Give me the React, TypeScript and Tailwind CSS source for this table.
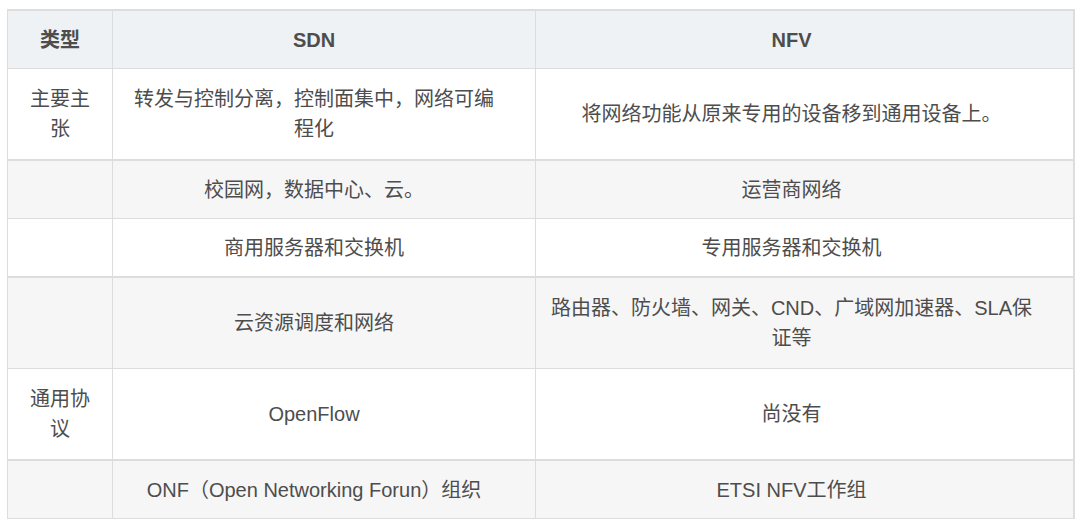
import React from "react";

type Row = {
  c: [string, string, string];
  h: string;
  bg: string;
  bb: string;
  header?: boolean;
};

const rows: Row[] = [
  { c: ["类型", "SDN", "NFV"], h: "h-[57px]", bg: "bg-[#eef2f5]", bb: "border-b", header: true },
  {
    c: ["主要主张", "转发与控制分离，控制面集中，网络可编程化", "将网络功能从原来专用的设备移到通用设备上。"],
    h: "h-[90px]",
    bg: "bg-white",
    bb: "border-b-2",
  },
  { c: ["", "校园网，数据中心、云。", "运营商网络"], h: "h-[57px]", bg: "bg-[#f6f6f6]", bb: "border-b" },
  { c: ["", "商用服务器和交换机", "专用服务器和交换机"], h: "h-[57px]", bg: "bg-white", bb: "border-b-2" },
  {
    c: ["", "云资源调度和网络", "路由器、防火墙、网关、CND、广域网加速器、SLA保证等"],
    h: "h-[90px]",
    bg: "bg-[#f6f6f6]",
    bb: "border-b",
  },
  { c: ["通用协议", "OpenFlow", "尚没有"], h: "h-[90px]", bg: "bg-white", bb: "border-b-2" },
  {
    c: ["", "ONF（Open Networking Forun）组织", "ETSI NFV工作组"],
    h: "h-[57px]",
    bg: "bg-[#f6f6f6]",
    bb: "border-b",
  },
];

export default function App() {
  return (
    <div
      className="min-h-[525px] w-[1084px] bg-white pt-[9px] pl-[7px]"
      style={{ fontFamily: '"Liberation Sans", "Noto Sans CJK SC", sans-serif' }}
    >
      <div className="w-[1068px] border-t-2 border-l border-r-2 border-[#dddddd] text-[20px] leading-[30px] text-[#4d4d4d]">
        {rows.map((r, i) => (
          <div key={i} className={`flex ${r.bg} ${r.bb} border-[#dddddd]`}>
            <div
              className={`${r.h} flex w-[105px] shrink-0 items-center justify-center border-r border-[#dddddd] px-[16px] text-center ${
                r.header ? "font-bold" : ""
              }`}
            >
              <div>{r.c[0]}</div>
            </div>
            <div
              className={`${r.h} flex w-[423px] shrink-0 items-center justify-center border-r border-[#dddddd] pl-[16px] pr-[36px] text-center ${
                r.header ? "font-bold" : ""
              }`}
            >
              <div>{r.c[1]}</div>
            </div>
            <div
              className={`${r.h} flex w-[537px] shrink-0 items-center justify-center pl-[13px] pr-[39px] text-center ${
                r.header ? "font-bold" : ""
              }`}
            >
              <div>{r.c[2]}</div>
            </div>
          </div>
        ))}
      </div>
    </div>
  );
}
